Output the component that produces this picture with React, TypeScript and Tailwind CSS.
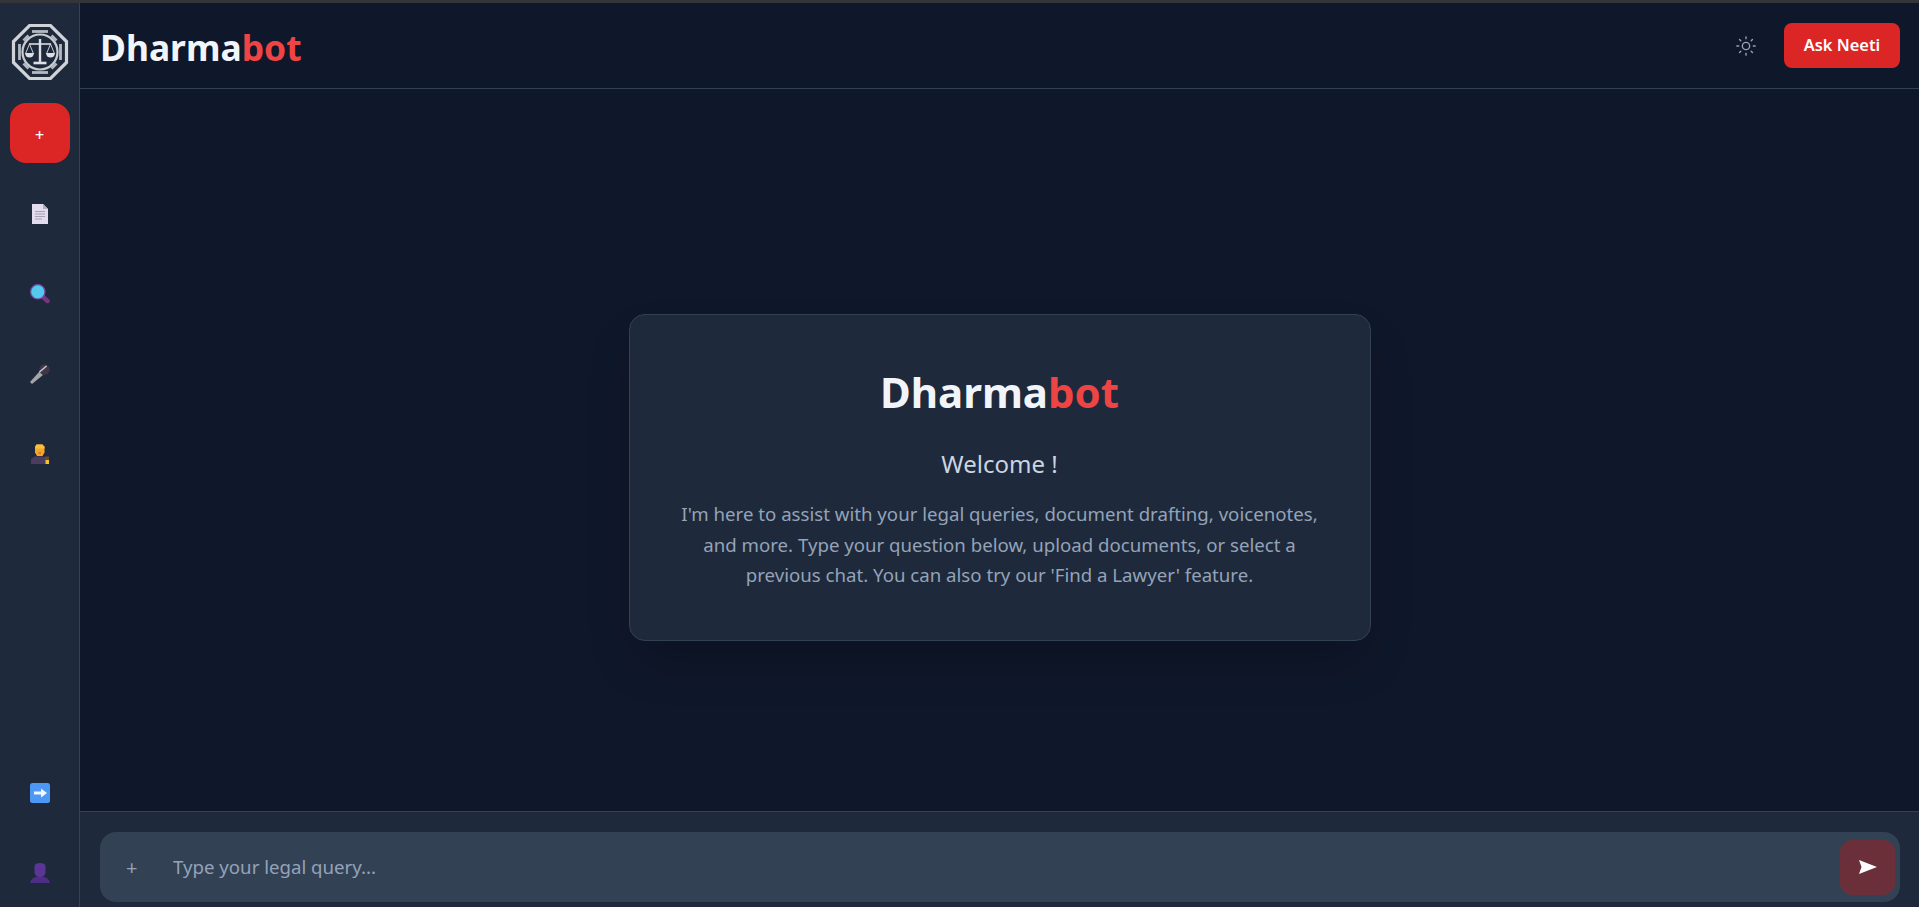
import { Sun } from "lucide-react";

const font = { fontFamily: '"Noto Sans", "Open Sans", sans-serif' };

const Logo = () => (
  <svg width="58" height="58" viewBox="0 0 58 58" fill="none">
    <polygon points="18.5,2.5 39.5,2.5 55.5,18.5 55.5,39.5 39.5,55.5 18.5,55.5 2.5,39.5 2.5,18.5" stroke="#d0d3d8" strokeWidth="3.2" />
    <g stroke="#b4b9c0" strokeWidth="2.8">
      <path d="M21 8.5H37" />
      <path d="M21 49.5H37" />
      <path d="M8.5 21V37" />
      <path d="M49.5 21V37" />
      <path d="M12.5 17.5L17.5 12.5" />
      <path d="M45.5 17.5L40.5 12.5" />
      <path d="M12.5 40.5L17.5 45.5" />
      <path d="M45.5 40.5L40.5 45.5" />
    </g>
    <circle cx="29" cy="29" r="17.5" stroke="#c9cdd2" strokeWidth="2.2" />
    <g stroke="#dcdfe3">
      <path d="M29 16V40" strokeWidth="2.4" />
      <path d="M18 21H40" strokeWidth="1.6" />
      <path d="M18.5 21L14.8 30M18.5 21L22.2 30" strokeWidth="0.9" />
      <path d="M39.5 21L35.8 30M39.5 21L43.2 30" strokeWidth="0.9" />
      <path d="M22.5 40H35.5" strokeWidth="2.6" />
    </g>
    <path d="M14 30H23A4.5 4.5 0 0 1 14 30Z" fill="#dcdfe3" />
    <path d="M35 30H44A4.5 4.5 0 0 1 35 30Z" fill="#dcdfe3" />
  </svg>
);

const DocIcon = () => (
  <svg width="16" height="20" viewBox="0 0 16 20">
    <path d="M0 0H11L16 5V20H0Z" fill="#e3dcec" />
    <path d="M11 0L16 5H11Z" fill="#b5aec0" />
    <path d="M3 7.5H13M3 10H13M3 12.5H13M3 15H10" stroke="#a79fb3" strokeWidth="1" />
  </svg>
);

const SearchIcon = () => (
  <svg width="20" height="20" viewBox="0 0 20 20">
    <path d="M12.5 12.5L17.5 17" stroke="#75357f" strokeWidth="4.4" strokeLinecap="round" />
    <circle cx="7.8" cy="7.8" r="7.2" fill="#55c8ee" stroke="#6b4fa0" strokeWidth="1.2" />
  </svg>
);

const MicIcon = () => (
  <svg width="20" height="20" viewBox="0 0 20 20">
    <path d="M0 18L9.5 7.5L13 11L2 20Z" fill="#a5a4a9" />
    <circle cx="14.5" cy="5.5" r="5.2" fill="#3f3646" />
    <path d="M9.5 8L16.5 2" stroke="#c9c6cf" strokeWidth="1.6" />
  </svg>
);

const LawyerIcon = () => (
  <svg width="18" height="20" viewBox="0 0 18 20">
    <path d="M0 20V15.5L3.5 12.5H12L14 14H16V20Z" fill="#4a3d5f" />
    <rect x="14.5" y="16" width="3.5" height="4" fill="#f5c32c" />
    <rect x="13.5" y="12.5" width="4.5" height="3.5" fill="#5d4a42" />
    <path d="M4 2.5L5.5 0.5H11.5L13.5 2.5V8.5L11.5 12H6L4 8.5Z" fill="#f4a62a" />
    <path d="M4 3.5L5.5 0.5H11.5L13.5 3.5V4.5H4Z" fill="#f7c13a" />
    <path d="M7.5 9H10" stroke="#b4541c" strokeWidth="1" />
  </svg>
);

const ArrowIcon = () => (
  <svg width="20" height="20" viewBox="0 0 20 20">
    <rect width="20" height="20" rx="2.5" fill="#4d97f5" />
    <path d="M4 8.5H11V5.5L17 10L11 14.5V11.5H4Z" fill="#f3f6fb" />
  </svg>
);

const UserIcon = () => (
  <svg width="20" height="20" viewBox="0 0 20 20">
    <path d="M0 20C1 15.5 4 14.5 7 13.5H13C16 14.5 19 15.5 20 20Z" fill="#4f2d86" />
    <path d="M4.5 3C4.5 1 7 0 10 0C13 0 15.5 1 15.5 3V9C15.5 12 13 14 10 14C7 14 4.5 12 4.5 9Z" fill="#5b3596" />
  </svg>
);

const sideItems = [DocIcon, SearchIcon, MicIcon, LawyerIcon];

export default function App() {
  return (
    <div className="flex h-screen flex-col bg-[#0f172a]" style={font}>
      <div className="h-[3px] shrink-0 bg-[#333539]" />
      <div className="flex min-h-0 flex-1">
        <aside className="flex w-20 shrink-0 flex-col items-center border-r border-[#334155] bg-[#1e293b] pt-[20px] pb-[24px]">
          <Logo />
          <button className="mt-[22px] flex h-[60px] w-[60px] items-center justify-center rounded-2xl bg-[#dc2626] pt-[4px] text-base font-medium text-white">
            +
          </button>
          <div className="mt-[11px] flex flex-col items-center">
            {sideItems.map((Icon, i) => (
              <div key={i} className="flex h-20 w-12 items-center justify-center">
                <Icon />
              </div>
            ))}
          </div>
          <div className="mt-auto flex flex-col items-center gap-[60px]">
            <ArrowIcon />
            <UserIcon />
          </div>
        </aside>

        <main className="flex min-w-0 flex-1 flex-col">
          <header className="flex h-[86px] shrink-0 items-center justify-between border-b border-[#334155] pr-[19px] pl-5">
            <h1 className="pt-[4px] text-[35.4px] font-bold text-[#f1f5f9]">
              Dharma<span className="text-[#ef4444]">bot</span>
            </h1>
            <div className="flex items-center gap-[27px]">
              <Sun size={22} strokeWidth={1.5} className="text-[#94a3b8]" />
              <button className="h-[45px] w-[116px] rounded-lg bg-[#dc2626] text-[16.4px] font-semibold text-white">
                Ask Neeti
              </button>
            </div>
          </header>

          <section className="flex flex-1 items-center justify-center pt-[55px]">
            <div className="h-[327px] w-[742px] rounded-2xl border border-[#334155] bg-[#1e293b] px-12 pt-[45px] text-center shadow-2xl">
              <h2 className="text-[42px] leading-[64px] font-bold text-[#f1f5f9]">
                Dharma<span className="text-[#ef4444]">bot</span>
              </h2>
              <p className="mt-[24px] text-2xl text-[#cbd5e1]">Welcome !</p>
              <p className="mt-[19px] text-[18.65px] leading-[30.6px] text-[#94a3b8]">
                I'm here to assist with your legal queries, document drafting, voicenotes, and more. Type your question below, upload documents, or select a previous chat. You can also try our 'Find a Lawyer' feature.
              </p>
            </div>
          </section>

          <footer className="shrink-0 border-t border-[#334155] bg-[#1e293b] pt-5 pr-[19px] pb-[5px] pl-5">
            <div className="flex h-[70px] items-center rounded-2xl bg-[#334155] pr-[5px] pl-[26px]">
              <span className="mt-[2px] w-[47px] text-xl text-[#94a3b8]">+</span>
              <input
                placeholder="Type your legal query..."
                className="min-w-0 flex-1 bg-transparent text-[18.65px] text-[#f1f5f9] outline-none placeholder:text-[#94a3b8]"
              />
              <button className="flex h-[55px] w-[55px] items-center justify-center rounded-xl bg-[#6b2f3a]">
                <svg width="18" height="14" viewBox="0 0 18 14">
                  <path d="M0 0L18 7L0 14L2.5 7Z" fill="#ffffff" />
                </svg>
              </button>
            </div>
          </footer>
        </main>
      </div>
    </div>
  );
}
